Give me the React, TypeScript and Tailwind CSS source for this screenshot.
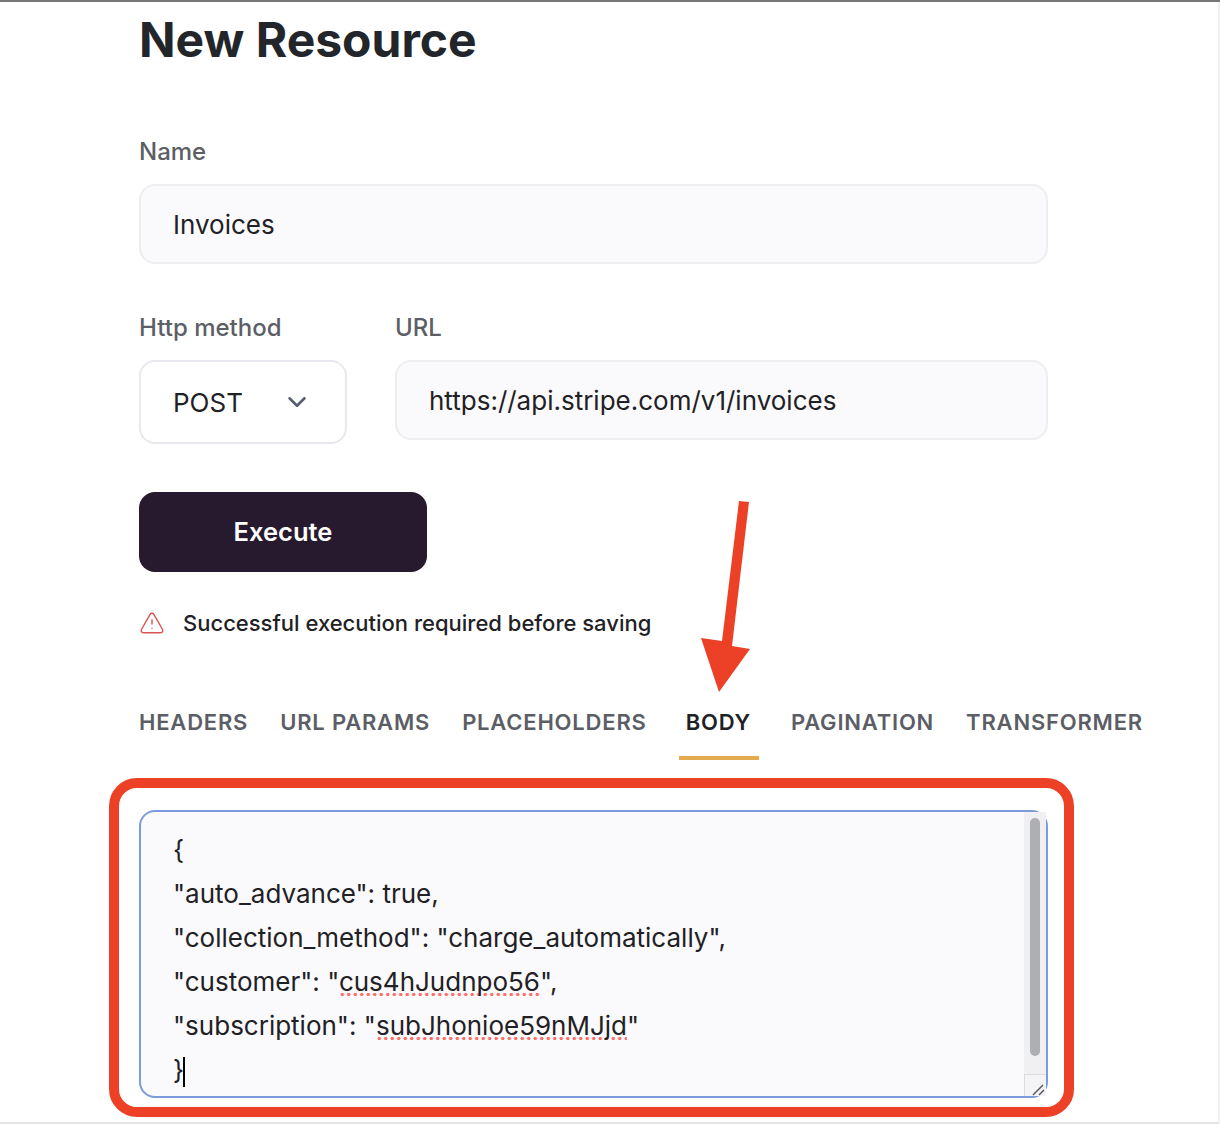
import { ChevronDown, TriangleAlert } from 'lucide-react'

const tabs = ['HEADERS', 'URL PARAMS', 'PLACEHOLDERS', 'BODY', 'PAGINATION', 'TRANSFORMER']

function Label({ children }: { children: React.ReactNode }) {
  return <label className="block h-8 mb-[17px] text-2xl leading-[34px] font-medium text-[#5c5e66]">{children}</label>
}

function Misspelled({ children }: { children: React.ReactNode }) {
  return (
    <span className="bg-[radial-gradient(circle,#f8736b_1.7px,transparent_2px)] bg-[length:6.5px_5px] bg-repeat-x bg-[position:0_100%]">
      {children}
    </span>
  )
}

export default function App() {
  return (
    <div className="relative h-[1148px] bg-white font-['Inter',sans-serif] text-[#1f2125] overflow-hidden">
      <div className="h-[2px] bg-[#777777]" />
      <div className="h-[1122px] border-b-2 border-r-2 border-[#e4e4e9] border-r-[#f1f1f4] pl-[139px] pt-[9px]">
        <h1 className="h-[58px] text-5xl leading-[58px] font-bold text-[#22262b]">New Resource</h1>

        <div className="mt-[66px] w-[909px]">
          <Label>Name</Label>
          <div className="h-20 flex items-center px-8 rounded-2xl border-2 border-[#eeeef2] bg-[#fafafc] text-[26px]">
            Invoices
          </div>
        </div>

        {/* Method + url */}
        <div className="mt-[47px] w-[909px] flex gap-12 items-start">
          <div className="w-52">
            <Label>Http method</Label>
            <div className="h-[84px] flex items-center justify-between pl-8 pr-[33px] rounded-2xl border-2 border-[#e8e8ee] bg-white text-[26px]">
              POST
              <ChevronDown size={30} strokeWidth={2} className="text-[#565d6d]" />
            </div>
          </div>
          <div className="flex-1">
            <Label>URL</Label>
            <div className="h-20 flex items-center px-8 rounded-2xl border-2 border-[#eeeef2] bg-[#fafafc] text-[26px]">
              https://api.stripe.com/v1/invoices
            </div>
          </div>
        </div>

        <button className="mt-12 block w-72 h-20 rounded-2xl bg-[#281a2e] text-white text-[25.5px] font-semibold">
          Execute
        </button>

        <div className="mt-[35px] flex items-center h-8 text-[22px] font-medium">
          <TriangleAlert size={26} strokeWidth={1.3} className="mr-[18px] text-[#d9534f]" />
          Successful execution required before saving
        </div>

        {/* Tabs */}
        <div className="mt-[67px] flex gap-[32px] text-[22px] leading-8 font-semibold tracking-[0.8px] text-[#5c5e66]">
          {tabs.map((t) =>
            t === 'BODY' ? (
              <div key={t} className="h-[54px] pl-[7px] pr-[8px] border-b-4 border-[#e3aa50] text-[#1f2125]">
                {t}
              </div>
            ) : (
              <div key={t} className="h-[54px]">
                {t}
              </div>
            ),
          )}
        </div>

        {/* Body editor */}
        <div className="mt-[50px] w-[909px] h-[288px] flex rounded-2xl border-2 border-[#7b9cdc] bg-[#fafafc]">
          <div className="flex-1 pl-8 pt-4 text-[26px] leading-[44px] whitespace-pre">
            <div>{'{'}</div>
            <div>"auto_advance": true,</div>
            <div>"collection_method": "charge_automatically",</div>
            <div>
              "customer": "<Misspelled>cus4hJudnpo56</Misspelled>",
            </div>
            <div>
              "subscription": "<Misspelled>subJhonioe59nMJjd</Misspelled>"
            </div>
            <div>
              {'}'}
              <span className="inline-block w-[2px] h-[30px] -ml-[1px] bg-black align-middle" />
            </div>
          </div>
          <div className="w-[22px] flex flex-col">
            <div className="flex-1 bg-[#f0f0f3] px-[6px] pt-[6px] pb-[18px]">
              <div className="h-full rounded-full bg-[#aeafb3]" />
            </div>
            <div className="h-[22px] bg-[#f4f4f6] border-t border-l border-[#dcdcdc] flex items-end justify-end">
              <svg width="14" height="12" viewBox="0 0 14 12" fill="none" stroke="#55565a" strokeWidth="1.4">
                <path d="M1 11 L11 1" />
                <path d="M7 11 L12 6" />
              </svg>
            </div>
          </div>
        </div>
      </div>

      {/* Annotation */}
      <div className="absolute left-[109px] top-[778px] w-[965px] h-[339px] rounded-[28px] border-[10px] border-[#ec4126]" />
      <svg className="absolute left-[695px] top-[495px]" width="62" height="202" viewBox="0 0 62 202">
        <path d="M44 6 L54 7 L37 151 L55 154 L24 197 L6 143 L27 146 Z" fill="#ec4126" />
      </svg>
    </div>
  )
}
